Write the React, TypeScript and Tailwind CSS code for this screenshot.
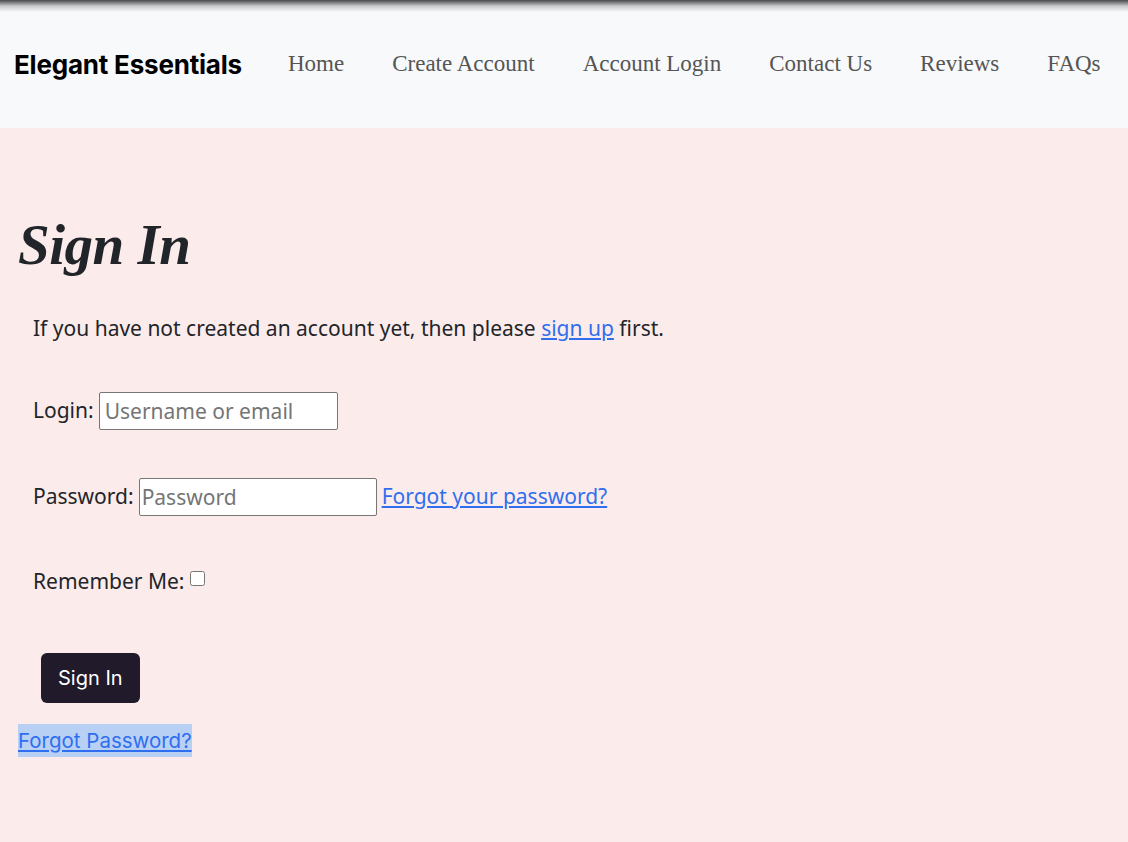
import React from "react";

const navLinks = ["Home", "Create Account", "Account Login", "Contact Us", "Reviews", "FAQs"];

export default function App() {
  return (
    <div className="min-h-[842px] bg-[#fcebeb]">
      <header className="relative h-[128px] bg-[#f8f9fa] flex items-center px-[14px]">
        <div className="absolute inset-x-0 top-0 h-[12px] bg-gradient-to-b from-[#4a4a4a] via-[#c8c9cb] to-[#f8f9fa]" />
        <span className="font-['Inter',sans-serif] font-bold text-[26px] text-black tracking-[-0.2px]">
          Elegant Essentials
        </span>
        <nav className="ml-[46px] flex gap-[48px] font-['Liberation_Serif',serif] text-[23px] text-[#555]">
          {navLinks.map((l) => (
            <a key={l} href="#">
              {l}
            </a>
          ))}
        </nav>
      </header>

      <main className="pt-[88px] px-[18px]">
        <h1 className="font-['Liberation_Serif',serif] font-bold italic text-[57px] leading-none text-[#212529] tracking-[-0.5px]">
          Sign In
        </h1>
        <form className="mt-[40px] pl-[15px] font-['Noto_Sans',sans-serif] text-[21px] text-[#212529]">
          <p>
            If you have not created an account yet, then please{" "}
            <a href="#" className="text-[#2f6fef] underline">
              sign up
            </a>{" "}
            first.
          </p>
          <div className="mt-[47px] flex items-center gap-[5px]">
            <label>Login:</label>
            <input
              placeholder="Username or email"
              className="w-[239px] h-[38px] border border-[#767676] bg-white px-[5px] text-[21px] placeholder-[#757575] rounded-[2px]"
            />
          </div>
          <div className="mt-[48px] flex items-center gap-[5px]">
            <label>Password:</label>
            <input
              type="password"
              placeholder="Password"
              className="w-[238px] h-[38px] border border-[#767676] bg-white px-[2px] text-[21px] placeholder-[#757575] rounded-[2px]"
            />
            <a href="#" className="text-[#2f6fef] underline">
              Forgot your password?
            </a>
          </div>
          <div className="mt-[50px] flex items-center gap-[6px]">
            <label>Remember Me:</label>
            <input type="checkbox" className="w-[15px] h-[15px] -mt-[5px]" />
          </div>
          <button
            type="button"
            className="mt-[56px] ml-[8px] h-[50px] px-[17px] rounded-[6px] bg-[#201a2b] text-white font-['Inter',sans-serif] text-[20px]"
          >
            Sign In
          </button>
        </form>
        <div className="mt-[23px] font-['Inter',sans-serif] text-[20.5px]">
          <a href="#" className="bg-[#b9d0f5] text-[#2f6fef] underline py-[4px]">
            Forgot Password?
          </a>
        </div>
      </main>
    </div>
  );
}
